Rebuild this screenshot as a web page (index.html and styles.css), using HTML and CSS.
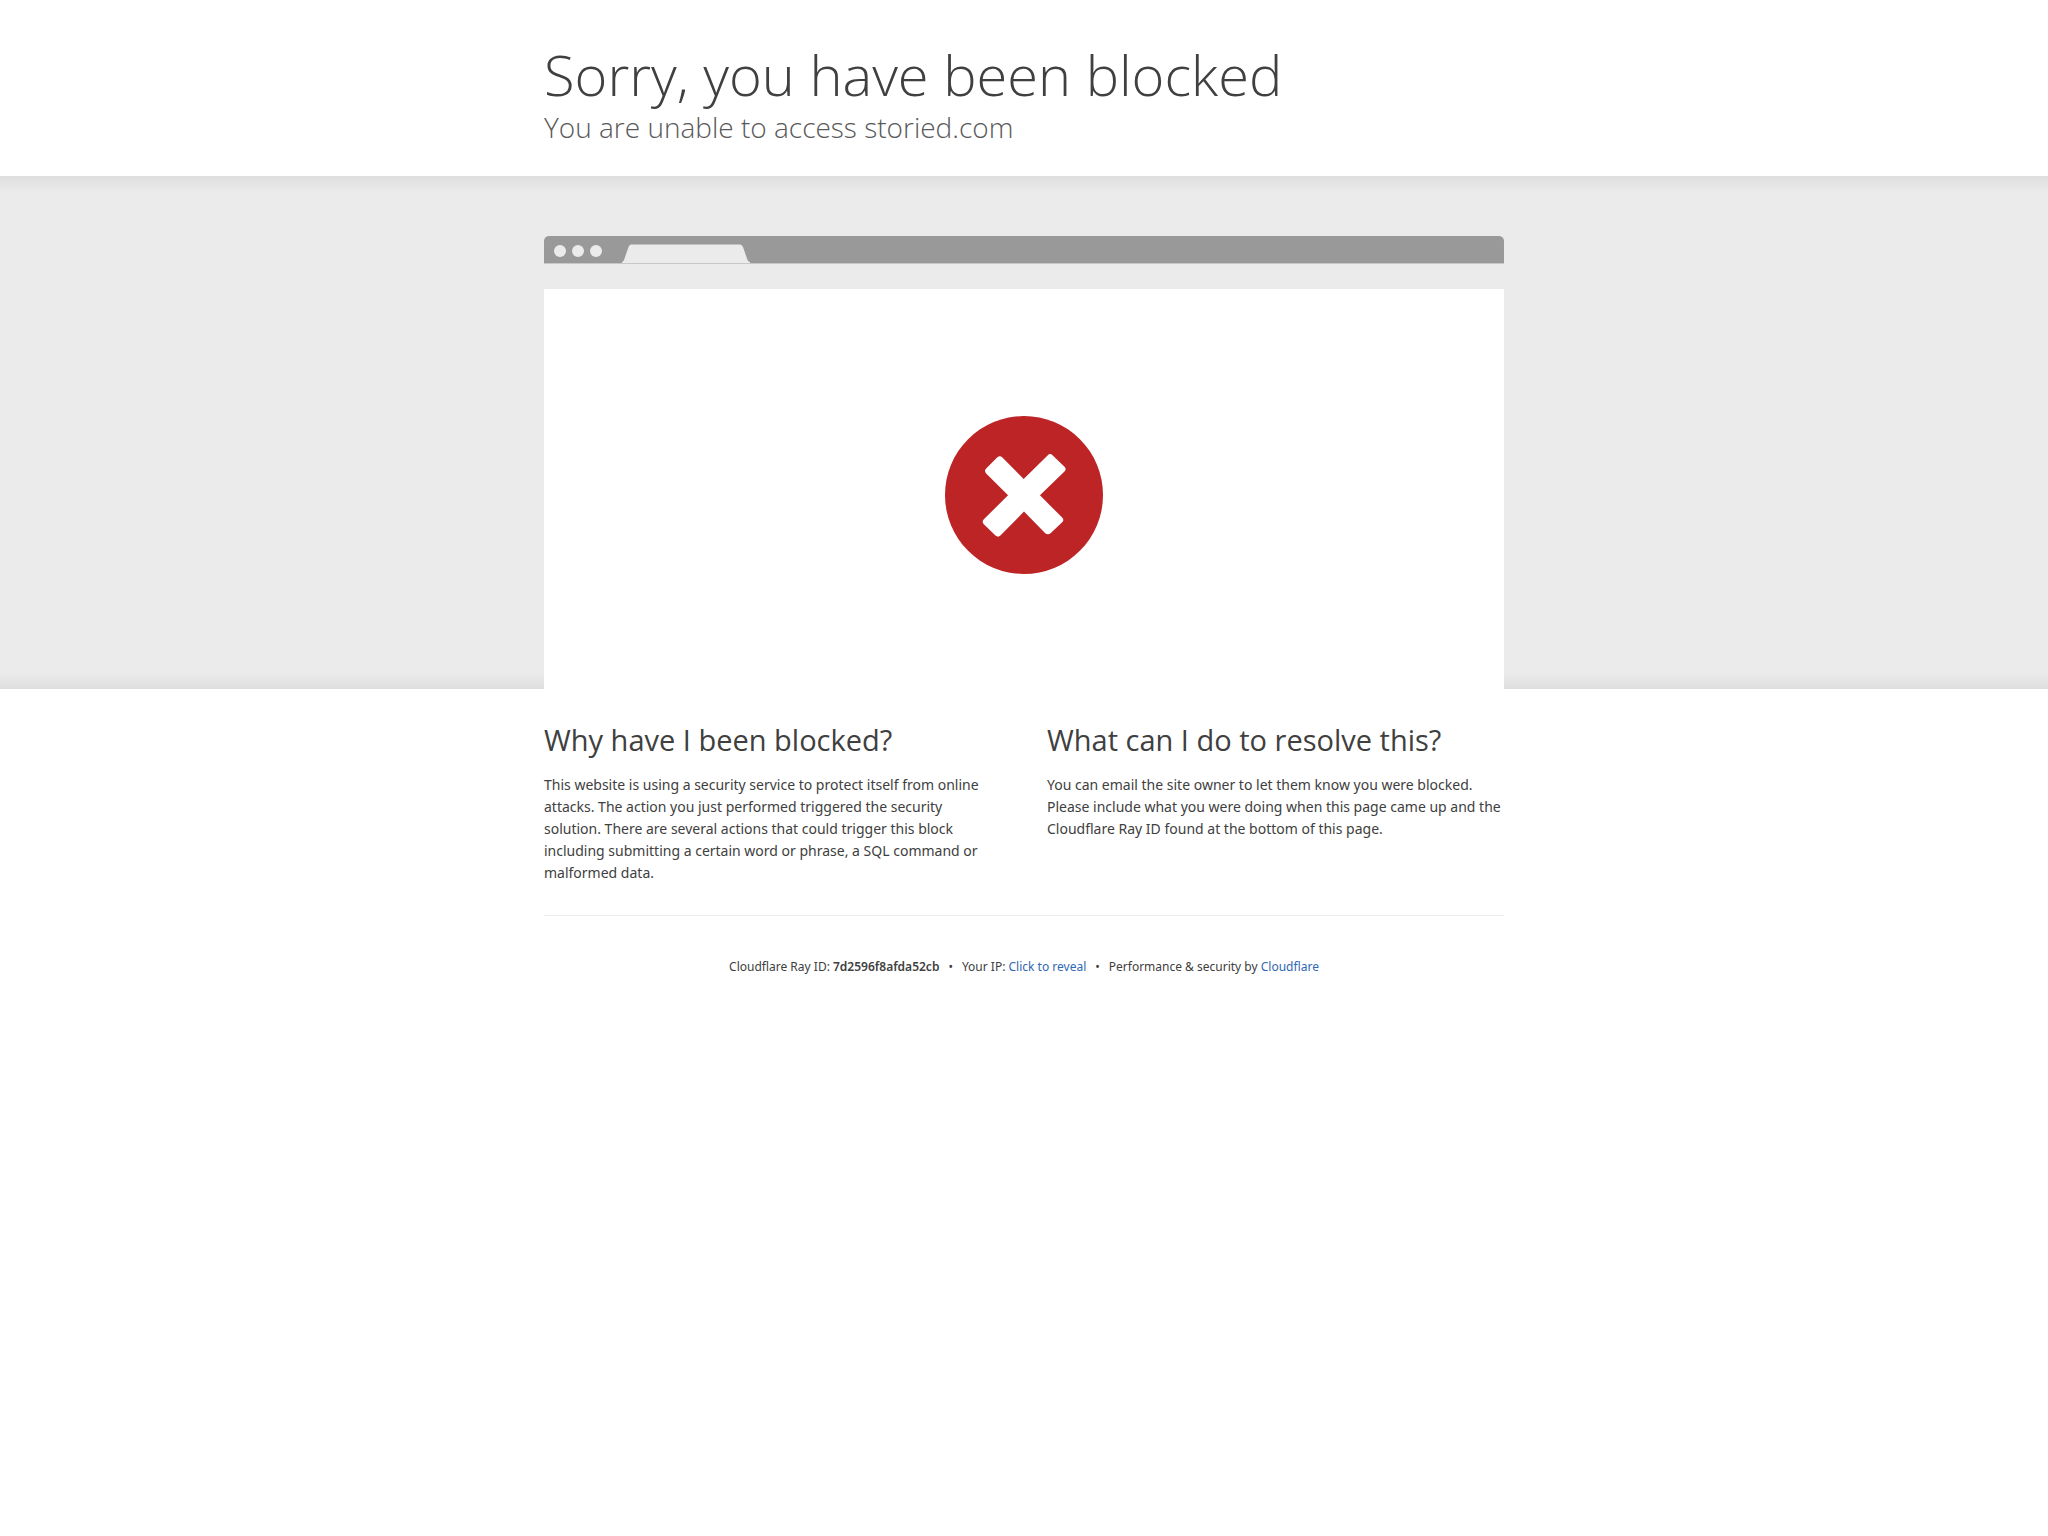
FILE: index.html
```html
<!DOCTYPE html>
<html lang="en">
<head>
    <meta charset="UTF-8">
    <meta name="viewport" content="width=device-width, initial-scale=1.0">
    <title>Attention Required! | Cloudflare</title>
    <link rel="stylesheet" href="styles.css">
</head>
<body>
    <header class="wrapper header">
        <h1>Sorry, you have been blocked</h1>
        <h2 class="subheadline">You are unable to access storied.com</h2>
    </header>

    <section class="highlight">
        <div class="wrapper">
            <div class="browser-bar">
                <span class="dot"></span>
                <span class="dot"></span>
                <span class="dot"></span>
                <svg class="tab" viewBox="0 0 130 20" aria-hidden="true">
                    <path d="M1 19 Q2.500 18.500 3 17 L7.500 4 Q8.500 1.500 10 1.500 H119 Q121 1.500 122 4 L126.500 17 Q127 18.500 129 19 V20 H1 Z"/>
                </svg>
            </div>
            <div class="screenshot">
                <svg class="error-icon" viewBox="0 0 476 476" role="img" aria-label="Blocked">
                    <circle cx="238" cy="238" r="238" fill="#bd2426"/>
                    <path fill="#fff" d="M157 125 Q165 117 173 125 L237 190 L309 119 Q316 111 324 118 L360 153 Q367 160 360 167 L286 239 L353 306 Q360 313 353 320 L318 353 Q310 360 302 353 L238 288 L167 360 Q160 367 152 360 L117 326 Q110 318 117 311 L190 239 L124 173 Q117 165 124 158 Z"/>
                </svg>
            </div>
        </div>
    </section>

    <main class="wrapper columns">
        <div class="column">
            <h2>Why have I been blocked?</h2>
            <p>This website is using a security service to protect itself from online attacks. The action you just performed triggered the security solution. There are several actions that could trigger this block including submitting a certain word or phrase, a SQL command or malformed data.</p>
        </div>
        <div class="column">
            <h2>What can I do to resolve this?</h2>
            <p>You can email the site owner to let them know you were blocked. Please include what you were doing when this page came up and the Cloudflare Ray ID found at the bottom of this page.</p>
        </div>
    </main>

    <footer class="wrapper footer">
        <span>Cloudflare Ray ID: <strong>7d2596f8afda52cb</strong></span>
        <span>&bull;</span>
        <span>Your IP: <button type="button" class="reveal">Click to reveal</button></span>
        <span>&bull;</span>
        <span>Performance &amp; security by <a href="#">Cloudflare</a></span>
    </footer>
</body>
</html>
```
FILE: styles.css
```css
* {
    box-sizing: border-box;
}
body {
    margin: 0;
    background-color: #fff;
    color: #404040;
    font-family: "Noto Sans", "Open Sans", sans-serif;
    font-size: 14px;
    line-height: 22px;
}
h1, h2, p {
    margin: 0;
}
h1, h2 {
    font-family: "Open Sans", sans-serif;
}
.wrapper {
    width: 90%;
    max-width: 960px;
    margin: 0 auto;
}
.header {
    padding: 38px 0 32px;
}
h1 {
    font-size: 56px;
    font-weight: 300;
    line-height: 73px;
}
h2 {
    font-size: 29px;
    font-weight: 400;
    line-height: 33px;
}
.subheadline {
    color: #595959;
    font-size: 28px;
    font-weight: 300;
}
.highlight {
    padding-top: 60px;
    background: linear-gradient(#dedede, #ebebeb00) top / 100% 16px no-repeat,
        linear-gradient(#ebebeb00, #dedede) bottom / 100% 16px no-repeat,
        #ebebeb;
}
.browser-bar {
    display: flex;
    align-items: center;
    gap: 6px;
    height: 28px;
    padding: 0 10px;
    background-color: #999;
    border-bottom: 1px solid #c8c8c8;
    border-radius: 5px 5px 0 0;
}
.dot {
    width: 12px;
    height: 12px;
    margin-top: 3px;
    border-radius: 50%;
    background-color: #ebebeb;
}
.tab {
    align-self: flex-end;
    width: 130px;
    height: 20px;
    margin-left: 13px;
    fill: #ebebeb;
}
.screenshot {
    display: flex;
    align-items: center;
    justify-content: center;
    height: 400px;
    margin-top: 25px;
    padding-top: 12px;
    background-color: #fff;
}
.error-icon {
    width: 158px;
    height: 158px;
}
.columns {
    display: grid;
    grid-template-columns: 1fr 1fr;
    gap: 46px;
    padding: 34px 0 31px;
    border-bottom: 1px solid #ebebeb;
}
.column p {
    margin-top: 18px;
}
.footer {
    display: flex;
    flex-wrap: wrap;
    justify-content: center;
    gap: 9px;
    padding: 41px 0;
    font-size: 12px;
    line-height: 20px;
}
.footer strong {
    font-weight: 600;
}
a, .reveal {
    color: #2f67b2;
    text-decoration: none;
}
.reveal {
    padding: 0;
    border: 0;
    background: none;
    font: inherit;
    cursor: pointer;
}
a:hover, .reveal:hover {
    color: #f68b1f;
}
@media (max-width: 720px) {
    .columns {
        grid-template-columns: 1fr;
    }
}
```
